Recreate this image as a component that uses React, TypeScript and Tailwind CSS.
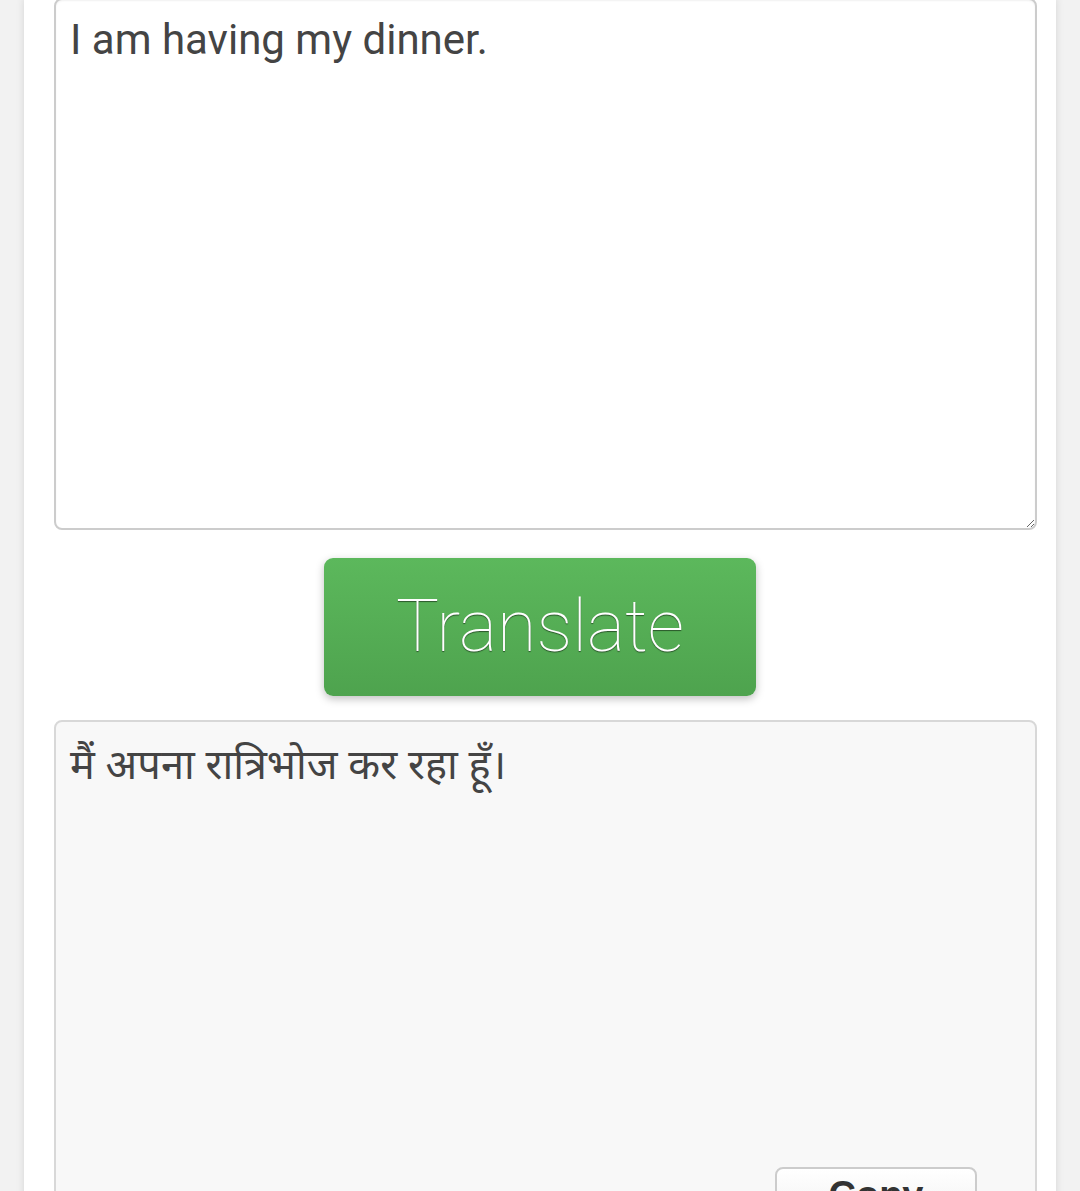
import React from "react";

export default function App() {
  return (
    <div className="h-[1191px] w-[1080px] overflow-hidden bg-[#f2f2f2]">
      <div className="mx-[24px] h-[1300px] bg-white shadow-[0_0_8px_rgba(0,0,0,0.12)] px-[30px]">
        <textarea
          readOnly
          defaultValue="I am having my dinner."
          className="mt-[-2px] block h-[532px] w-[983px] resize-y rounded-[8px] border-2 border-[#cccccc] bg-white px-[14px] py-[11px] text-[42px] leading-[58px] text-[#444] outline-none shadow-[inset_0_1px_2px_rgba(0,0,0,0.06)]"
          style={{ fontFamily: "Roboto, 'Liberation Sans', sans-serif" }}
        />
        <div className="flex justify-center pt-[28px] pb-[24px]">
          <button
            className="h-[138px] w-[432px] rounded-[9px] bg-gradient-to-b from-[#5cb85c] to-[#4ea34e] text-[72px] font-thin text-white shadow-[0_3px_8px_rgba(0,0,0,0.25)] [text-shadow:0_1px_1px_rgba(0,0,0,0.5)]"
            style={{ fontFamily: "Roboto, 'Liberation Sans', sans-serif" }}
          >
            Translate
          </button>
        </div>
        <div className="relative h-[520px] w-[983px] rounded-[8px] border-2 border-[#d8d8d8] bg-[#f8f8f8] px-[14px] py-[13px]">
          <div
            className="text-[41.5px] leading-[56px] text-[#444]"
            style={{ fontFamily: "'Noto Sans', 'Noto Sans Devanagari', 'Lohit Devanagari', sans-serif" }}
          >
            मैं अपना रात्रिभोज कर रहा हूँ।
          </div>
          <div className="absolute left-[719px] top-[445px] flex h-[60px] w-[202px] justify-center rounded-[8px] border-2 border-[#cccccc] bg-gradient-to-b from-white to-[#f0f0f0] pt-[4px]">
            <span
              className="text-[38px] font-bold leading-[44px] text-[#333]"
              style={{ fontFamily: "'Liberation Sans', Arial, sans-serif" }}
            >
              Copy
            </span>
          </div>
        </div>
      </div>
    </div>
  );
}
